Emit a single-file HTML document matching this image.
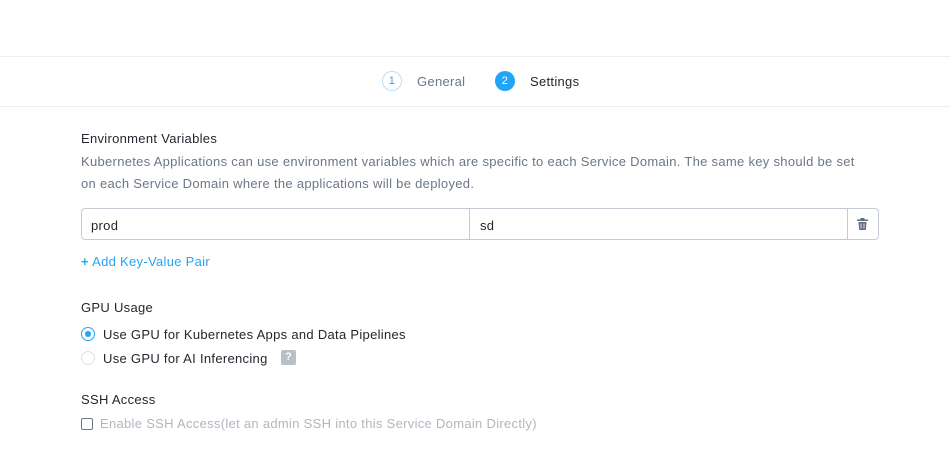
<!DOCTYPE html>
<html><head><style>
body{margin:0;width:950px;height:470px;background:#fff;font-family:"Liberation Sans",sans-serif;position:relative;overflow:hidden;letter-spacing:.3px}
.a{position:absolute}
.hr{position:absolute;left:0;width:950px;height:1px;background:#eceef1}
.t{font-size:13px;color:#22272e}
.g{font-size:13px;color:#6b7785}
</style></head><body>
<div class="hr" style="top:56px"></div>
<div class="hr" style="top:106px"></div>
<div class="a" style="left:382px;top:71px;width:18px;height:18px;border:1px solid #b5e0fb;border-radius:50%;font-size:11px;color:#22a5f7;text-align:center;line-height:18px">1</div>
<div class="a g" style="left:417px;top:74px">General</div>
<div class="a" style="left:495px;top:71px;width:20px;height:20px;background:#22a5f7;border-radius:50%;font-size:11px;color:#fff;text-align:center;line-height:20px">2</div>
<div class="a t" style="left:530px;top:74px">Settings</div>
<div class="a t" style="left:81px;top:131px">Environment Variables</div>
<div class="a g" style="left:81px;top:151px;width:790px;line-height:22px">Kubernetes Applications can use environment variables which are specific to each Service Domain. The same key should be set on each Service Domain where the applications will be deployed.</div>
<div class="a" style="left:81px;top:208px;width:796px;height:30px;border:1px solid #c4cad3;border-radius:4px"></div>
<div class="a" style="left:469px;top:209px;width:1px;height:30px;background:#c4cad3"></div>
<div class="a" style="left:847px;top:209px;width:1px;height:30px;background:#c4cad3"></div>
<div class="a t" style="left:91px;top:218px">prod</div>
<div class="a t" style="left:480px;top:218px">sd</div>
<svg class="a" style="left:857px;top:218px" width="11" height="12" viewBox="0 0 11 12"><rect x="0" y="1.5" width="11" height="1.5" fill="#5f6d7e"/><rect x="3.5" y="0" width="4" height="2" fill="#5f6d7e"/><path d="M1.5 4h8l-.7 8h-6.6z" fill="#5f6d7e"/><path d="M4 5.5v5M7 5.5v5" stroke="#fff" stroke-width=".8"/></svg>
<div class="a" style="left:81px;top:254px;font-size:13px;color:#22a5f7"><b>+</b> Add Key-Value Pair</div>
<div class="a t" style="left:81px;top:300px">GPU Usage</div>
<div class="a" style="left:81px;top:327px;width:12px;height:12px;border:1px solid #22a5f7;border-radius:50%"></div>
<div class="a" style="left:85px;top:331px;width:6px;height:6px;background:#22a5f7;border-radius:50%"></div>
<div class="a t" style="left:103px;top:327px">Use GPU for Kubernetes Apps and Data Pipelines</div>
<div class="a" style="left:81px;top:351px;width:12px;height:12px;border:1px solid #dde1e6;border-radius:50%"></div>
<div class="a t" style="left:103px;top:351px">Use GPU for AI Inferencing</div>
<div class="a" style="left:281px;top:350px;width:15px;height:15px;background:#b8bfc8;border-radius:2px;color:#fff;font-size:11px;font-weight:bold;text-align:center;line-height:15px;letter-spacing:0">?</div>
<div class="a t" style="left:81px;top:392px">SSH Access</div>
<div class="a" style="left:81px;top:418px;width:10px;height:10px;border:1px solid #6b7785;border-radius:2px"></div>
<div class="a" style="left:100px;top:416px;font-size:13px;color:#b0b7c0">Enable SSH Access(let an admin SSH into this Service Domain Directly)</div>
</body></html>
